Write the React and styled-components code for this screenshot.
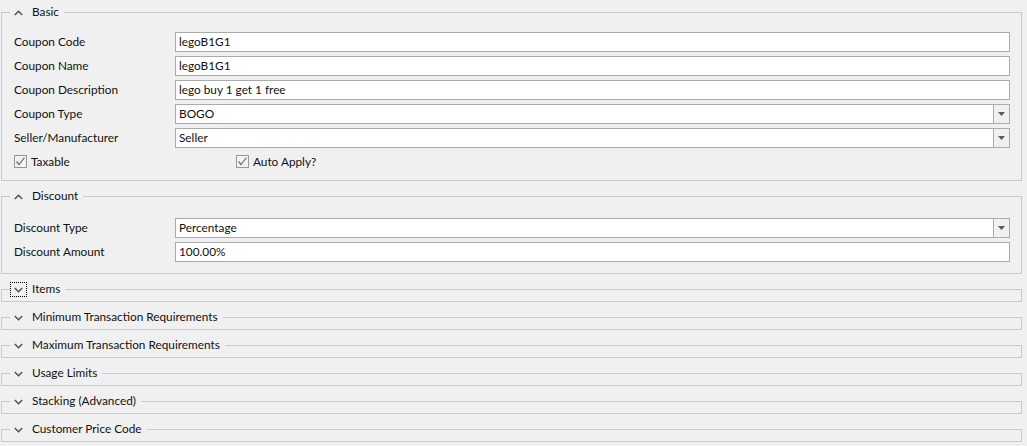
import styled, {createGlobalStyle} from 'styled-components';

const GlobalStyle = createGlobalStyle`
  body {
    margin: 0;
    background: #f0f0f0;
    font-family: Lato, "Liberation Sans", sans-serif;
    font-size: 11.8px;
    color: #111;
  }
`;

const Page = styled.div`
  display: flex;
  flex-direction: column;
  gap: 15px;
  padding: 12px 5px 0 1px;
`;

const Group = styled.section`
  border: 1px solid #cacaca;
  border-top: none;
`;

const Header = styled.div`
  display: flex;
  align-items: center;
  height: 25px;
  margin: -12px -1px -1px;

  &::before {
    content: '';
    width: 9px;
    height: 1px;
    background: #cacaca;
  }

  &::after {
    content: '';
    flex: 1;
    height: 1px;
    margin-left: 5px;
    background: #cacaca;
  }
`;

const Toggle = styled.div`
  width: 15px;
  height: 13px;
  display: flex;
  align-items: center;
  justify-content: center;
  border: 1px ${(props) => (props.$focused ? 'dotted #000' : 'solid transparent')};
`;

const Title = styled.span`
  margin-left: 5px;
  line-height: 14px;
  padding-bottom: 2px;
  white-space: nowrap;
`;

const Body = styled.div`
  padding: ${(props) => props.$top}px 11px ${(props) => props.$bottom}px 12px;
`;

const Fields = styled.div`
  display: grid;
  grid-template-columns: 161px 1fr;
  grid-auto-rows: 20px;
  row-gap: 4px;
  align-items: center;
`;

const Label = styled.div`
  white-space: nowrap;
  line-height: 14px;
  padding-bottom: 1px;
`;

const Input = styled.div`
  height: 20px;
  box-sizing: border-box;
  border: 1px solid #ababab;
  background: #fff;
  display: flex;
  align-items: center;
`;

const InputText = styled.span`
  flex: 1;
  padding: 0 0 1px 3px;
  line-height: 14px;
  white-space: nowrap;
`;

const DropButton = styled.div`
  width: 15px;
  height: 100%;
  border-left: 1px solid #ababab;
  background: #f0f0f0;
  display: flex;
  align-items: center;
  justify-content: center;
`;

const Checks = styled.div`
  display: flex;
  margin-top: 7px;
`;

const CheckItem = styled.label`
  display: flex;
  align-items: center;
  gap: 4px;
  width: ${(props) => props.$width || 'auto'};
  height: 13px;
  line-height: 14px;
`;

const Box = styled.span`
  width: 13px;
  height: 13px;
  box-sizing: border-box;
  border: 1px solid #979797;
  background: #f3f3f3;
  display: flex;
  align-items: center;
  justify-content: center;
`;

const Chevron = ({up}) => (
  <svg width="9" height="6" viewBox="0 0 9 6">
    <polyline
      points={up ? '0.8,5 4.5,1.3 8.2,5' : '0.8,1 4.5,4.7 8.2,1'}
      fill="none"
      stroke="#555"
      strokeWidth="1.6"
    />
  </svg>
);

const Arrow = () => (
  <svg width="7" height="4" viewBox="0 0 7 4">
    <polygon points="0,0 7,0 3.5,4" fill="#5a5a5a" />
  </svg>
);

const Check = () => (
  <svg width="11" height="11" viewBox="0 0 11 11">
    <polyline points="1.5,5.5 4,8.5 9.5,1.5" fill="none" stroke="#6b6b6b" strokeWidth="1.2" />
  </svg>
);

const Section = ({title, open, focused, top, bottom, children}) => (
  <Group>
    <Header>
      <Toggle $focused={focused}>
        <Chevron up={open} />
      </Toggle>
      <Title>{title}</Title>
    </Header>
    {open && (
      <Body $top={top} $bottom={bottom}>
        {children}
      </Body>
    )}
  </Group>
);

const Field = ({label, value, combo}) => (
  <>
    <Label>{label}</Label>
    <Input>
      <InputText>{value}</InputText>
      {combo && (
        <DropButton>
          <Arrow />
        </DropButton>
      )}
    </Input>
  </>
);

const Checkbox = ({label, width}) => (
  <CheckItem $width={width}>
    <Box>
      <Check />
    </Box>
    {label}
  </CheckItem>
);

const collapsed = [
  'Minimum Transaction Requirements',
  'Maximum Transaction Requirements',
  'Usage Limits',
  'Stacking (Advanced)',
  'Customer Price Code',
];

export default function App() {
  return (
    <>
      <GlobalStyle />
      <Page>
        <Section title="Basic" open top={8} bottom={12}>
          <Fields>
            <Field label="Coupon Code" value="legoB1G1" />
            <Field label="Coupon Name" value="legoB1G1" />
            <Field label="Coupon Description" value="lego buy 1 get 1 free" />
            <Field label="Coupon Type" value="BOGO" combo />
            <Field label="Seller/Manufacturer" value="Seller" combo />
          </Fields>
          <Checks>
            <Checkbox label="Taxable" width="222px" />
            <Checkbox label="Auto Apply?" />
          </Checks>
        </Section>
        <Section title="Discount" open top={10} bottom={11}>
          <Fields>
            <Field label="Discount Type" value="Percentage" combo />
            <Field label="Discount Amount" value="100.00%" />
          </Fields>
        </Section>
        <Section title="Items" focused />
        {collapsed.map((title) => (
          <Section key={title} title={title} />
        ))}
      </Page>
    </>
  );
}
